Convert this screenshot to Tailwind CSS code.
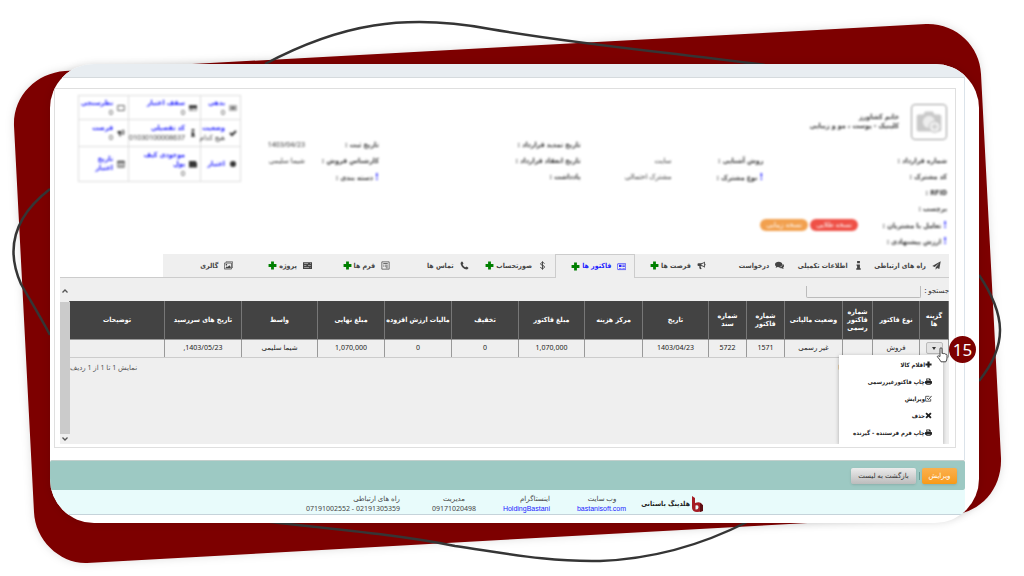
<!DOCTYPE html>
<html lang="fa" dir="rtl">
<head>
<meta charset="utf-8">
<meta name="viewport" content="width=device-width, initial-scale=1">
<title>فاکتور ها</title>
<script src="https://cdn.jsdelivr.net/npm/@tailwindcss/browser@4"></script>
</head>
<body class="relative min-h-screen overflow-hidden bg-white font-['Noto_Sans','DejaVu_Sans',sans-serif] text-[7px] leading-[10px] text-[#333] [&_b]:font-['DejaVu_Sans_Condensed','DejaVu_Sans',sans-serif]">

<svg class="hidden" aria-hidden="true">
  <symbol id="plus" viewBox="0 0 16 16"><path d="M5.500 1h5v4.500H15v5h-4.500V15h-5v-4.500H1v-5h4.500z" fill="currentColor"/></symbol>
  <symbol id="plane" viewBox="0 0 16 16"><path d="M15.500.5 13 14l-4-1.700L6.500 15.500V11.500L13 3.500 4.800 10.600.5 9z" fill="currentColor"/></symbol>
  <symbol id="info" viewBox="0 0 16 16"><path d="M5.500 0h5v4h-5zM4.500 6h6v7H12v2.500H4V13h1.500V8.500h-1z" fill="currentColor"/></symbol>
  <symbol id="chat" viewBox="0 0 16 16"><path d="M6.500 1.500c3.600 0 6.500 2.100 6.500 4.700s-2.900 4.700-6.500 4.700c-.6 0-1.200 0-1.800-.2-1.200.8-2.500 1.200-3.700 1.200.6-.6 1-1.200 1.100-2C.8 9 0 7.700 0 6.200c0-2.600 2.900-4.700 6.500-4.700zM13.800 5.500c1.400.7 2.200 2 2.200 3.300 0 1.200-.6 2.200-1.600 2.900.1.900.5 1.500 1.100 2.300-1.200 0-2.300-.4-3.200-1.200-2 .4-4.200.1-5.600-1.100C11 11.500 14 9 13.800 5.500z" fill="currentColor"/></symbol>
  <symbol id="horn" viewBox="0 0 16 16"><path d="M14 1v11c-2.500-2-5-3-7-3.200-1 .5-.8 1.500 0 2 0 1-.2 1.500 1.500 3-1 1-3 .8-3.600 0-.6-1.700-1.200-3-.6-5H2.500C1.500 8.800 1 8 1 7.500v-2C1 4.700 1.700 4 2.500 4H7c2.200 0 4.800-1.400 7-3zM12.500 3.500C11 4.500 9.500 5.100 8 5.300v2.400c1.500.2 3 .8 4.500 1.800z" fill="currentColor" fill-rule="evenodd"/><path d="M14 5c1.500 0 1.500 3 0 3z" fill="currentColor"/></symbol>
  <symbol id="news" viewBox="0 0 16 16"><path d="M1 3h14.500v10.500H1.500L.5 12.500V4.500H2" fill="none" stroke="currentColor" stroke-width="1.200"/><path d="M3.500 5H8v4H3.500zM9.500 5H14v1.200H9.500zM9.500 7.500H14v1.200H9.500zM3.500 10.500h4.500v1.200H3.500zM9.500 10.500H14v1.200H9.500z" fill="currentColor"/></symbol>
  <symbol id="dollar" viewBox="0 0 16 16"><path d="M11.500 4.500C11 3.300 9.800 2.800 8 2.800c-2 0-3.300.9-3.300 2.300 0 3.500 6.800 1.800 6.800 5.500 0 1.600-1.400 2.600-3.500 2.600-2 0-3.300-.7-3.700-2.200M8 .5v15" fill="none" stroke="currentColor" stroke-width="1.700"/></symbol>
  <symbol id="phone" viewBox="0 0 16 16"><path d="M1 3.500 3 1l1.500.5 1.700 3-1.500 1.600c1 2.300 3 4.200 5.200 5.200l1.600-1.500 3 1.700.5 1.500-2.500 2C7 15 1 9 1 3.500z" fill="currentColor"/></symbol>
  <symbol id="form" viewBox="0 0 16 16"><path d="M1.500 1.500h13v13h-13z" fill="none" stroke="currentColor" stroke-width="1.300"/><path d="M4 4h8v1.200H4zM4 6.700h2v1.200H4zM7.200 6.700H12v1.200H7.200zM4 9.200h2v1.200H4zM7.200 9.200H12v1.200H7.200zM8.500 11.500H12v1.300H8.500z" fill="currentColor"/></symbol>
  <symbol id="server" viewBox="0 0 16 16"><path d="M0 2h16v12H0zm2 2v1h7V4zm0 3.500v1h4v-1zM2 11v1h9v-1zM12.500 4v1H14V4zM9 7.500v1h5v-1zm4 3.500v1h1v-1z" fill="currentColor" fill-rule="evenodd"/></symbol>
  <symbol id="image" viewBox="0 0 16 16"><path d="M3.500 3V1.500h12v10H14M.7 3.700h12.600v10.600H.7z" fill="none" stroke="currentColor" stroke-width="1.300"/><path d="m2 12.800 3-3.500 1.500 1.500L9.500 7.500l2.500 3v2.300zM3 5.500h2.500V8H3z" fill="currentColor"/></symbol>
  <symbol id="print" viewBox="0 0 16 16"><path d="M4 1h7l2 2v4h1.500C15.500 7 16 8 16 8.500V13h-3v2.500H3V13H0V8.500C0 7.700.7 7 1.500 7H3V1zM5 3v2.500h6V4.500H9V3zm0 9v1.200h6V12z" fill="currentColor" fill-rule="evenodd"/></symbol>
  <symbol id="edit" viewBox="0 0 16 16"><path d="M13 9v5.200H1.500V3H10" fill="none" stroke="currentColor" stroke-width="1.600"/><path d="m5 7 3 3.500L15 2" fill="none" stroke="currentColor" stroke-width="2"/></symbol>
  <symbol id="cross" viewBox="0 0 16 16"><path d="m4 1 4 4 4-4 3 3-4 4 4 4-3 3-4-4-4 4-3-3 4-4-4-4z" fill="currentColor"/></symbol>
  <symbol id="money" viewBox="0 0 16 16"><path d="M.5 3.500h15v9H.5z" fill="none" stroke="currentColor"/><path d="M3 5h10v6H3z" fill="currentColor" opacity=".7"/></symbol>
  <symbol id="card" viewBox="0 0 16 16"><path d="M.5 3h15v10H.5z" fill="none" stroke="currentColor"/><path d="M0 3h16v6H0zM3 10.500h4v1H3z" fill="currentColor"/></symbol>
  <symbol id="box" viewBox="0 0 16 16"><path d="M1.500 3h13v10h-13z" fill="none" stroke="currentColor" stroke-width="1.500"/></symbol>
  <symbol id="check" viewBox="0 0 16 16"><path d="m2 8 4 4 8-8" fill="none" stroke="currentColor" stroke-width="4"/></symbol>
  <symbol id="dot" viewBox="0 0 16 16"><circle cx="8" cy="8" r="6" fill="currentColor"/></symbol>
  <symbol id="wallet" viewBox="0 0 16 16"><path d="M0 2h14v3h2v10H0z" fill="currentColor"/></symbol>
  <symbol id="calendar" viewBox="0 0 16 16"><path d="M1.500 2.500h13v12h-13z" fill="none" stroke="currentColor" stroke-width="1.500"/><path d="M1 2h14v3H1zM4 7h3v2H4zM9 7h3v2H9zM4 11h3v2H4zM9 11h3v2H9z" fill="currentColor"/></symbol>
</svg>

<svg class="absolute inset-0 h-full w-full" viewBox="0 0 1024 576" preserveAspectRatio="none" aria-hidden="true">
  <defs><filter id="soft" x="-5%" y="-5%" width="110%" height="110%"><feDropShadow dx="0" dy="0" stdDeviation="4" flood-color="#000" flood-opacity=".13"/></filter></defs>
  <path filter="url(#soft)" fill="#7d0000" d="M14 126C13 96 36 73 65 71L926 24C956 23 980 46 981 74L1001 458C1002 488 982 512 952 515L87 563C60 564 35 540 34 512Z"/>
  <path fill="none" stroke="#353535" stroke-width="2.500" d="M265 64C340 24 405 13 490 29C590 46 660 51 765 65M50 189C15 216 5 248 21 284C30 300 41 318 50 335M979 275C1006 315 1008 345 979 381M270 522C345 530 405 536 455 546C510 554 550 562 600 561C650 559 700 546 747 522"/>
</svg>

<main class="relative mt-16 mr-[45px] ml-[50px] rounded-[44px] bg-white shadow-[0_0_8px_rgba(0,0,0,0.12)]">
  <div class="overflow-clip rounded-[44px] pr-[14px] pb-2">
    <div class="h-[14px] border-b border-[#d5dadd] bg-[#e8edf1]"></div>

    <div class="border-r border-[#dbe3ea] pt-[10px] pr-2 pb-3 pl-1">
      <section class="border border-[#dfdfdf] pr-[6px] pb-[3px] pl-[5px]">

        <header class="flex items-start justify-between pr-[2px] pl-[18px]">
          <div class="h-[165px] flex-1 pt-[15px] blur-[1px]">
            <div class="flex items-center gap-3">
              <svg class="h-9 w-9 rounded-sm border border-[#999]" viewBox="0 0 36 36" aria-label="عکس"><path d="M5 12q0-2 2-2h5l2-3h8l2 3h5q2 0 2 2v14q0 2-2 2H7q-2 0-2-2z" fill="#c9c9c9"/><circle cx="18" cy="18" r="6.500" fill="#eee"/><circle cx="24" cy="23" r="6" fill="#eee" stroke="#bbb"/><path d="M24 20v6M21 23h6" stroke="#bbb"/></svg>
              <div class="flex flex-col leading-[9px]"><b>خانم کشاورز</b><b>کلینیک - پوست ، مو و زیبایی</b></div>
            </div>
            <div class="-mt-[3px] grid auto-rows-[16px] grid-cols-[89fr_95fr_92fr_91fr_202fr_74fr_64fr] items-center whitespace-nowrap">
              <b class="col-start-5">تاریخ تمدید قرارداد :</b><b>تاریخ ثبت :</b><span>1403/04/23</span>
              <b>شماره قرارداد :</b><span></span><b>روش آشنایی :</b><span>سایت</span><b>تاریخ انعقاد قرارداد :</b><b>کارشناس فروش :</b><span>شیما سلیمی</span>
              <b>کد مشترک :</b><span></span><b><i class="text-[9px] text-[#22f] not-italic">!</i> نوع مشترک :</b><span>مشترک احتمالی</span><b>یادداشت :</b><b><i class="text-[9px] text-[#22f] not-italic">!</i> دسته بندی :</b><span></span>
              <b class="col-span-7">RFID :</b>
              <b class="col-span-7">برچسب :</b>
              <b><i class="text-[9px] text-[#22f] not-italic">!</i> تعامل با مشتریان :</b>
              <div class="col-span-6 flex gap-[2px] text-center text-white">
                <span class="w-12 rounded-md bg-[#ef5046] leading-[12px]">نسخه طلایی</span><span class="w-12 rounded-md bg-[#f2a04e] leading-[12px]">نسخه زیبایی</span>
              </div>
              <b class="col-span-7"><i class="text-[9px] text-[#22f] not-italic">!</i> ارزش پیشنهادی :</b>
            </div>
          </div>
          <table class="mt-[6px] w-[162px] table-fixed border-collapse leading-[9px] blur-[1px] [&_td]:border [&_td]:border-[#ddd] [&_td]:px-[3px] [&_a]:block [&_a]:font-['DejaVu_Sans_Condensed','DejaVu_Sans',sans-serif] [&_a]:font-bold [&_a]:text-[#22f] [&_svg]:size-2 [&_svg]:shrink-0 [&_td>div]:flex [&_td>div]:items-center [&_td>div]:gap-1">
            <colgroup><col class="w-[40px]"><col class="w-[72px]"><col class="w-[50px]"></colgroup>
            <tr class="h-6">
              <td><div><svg><use href="#money"/></svg><span><a href="#">بدهی</a>0</span></div></td>
              <td><div><svg><use href="#card"/></svg><span><a href="#">سقف اعتبار</a>0</span></div></td>
              <td><div><svg><use href="#box"/></svg><span><a href="#">نظرسنجی</a>0</span></div></td>
            </tr>
            <tr class="h-[27px]">
              <td><div><svg><use href="#check"/></svg><span class="whitespace-nowrap"><a href="#">وضعیت</a>هیچ کدام</span></div></td>
              <td><div><svg><use href="#info"/></svg><span><a href="#">کد تفصیلی</a>01030100008637</span></div></td>
              <td><div><svg><use href="#horn"/></svg><span><a href="#">فرصت</a>0</span></div></td>
            </tr>
            <tr class="h-[35px]">
              <td><div><svg><use href="#dot"/></svg><a href="#">اعتبار</a></div></td>
              <td><div><svg><use href="#wallet"/></svg><span><a href="#">موجودی کیف پول</a>0</span></div></td>
              <td><div><svg><use href="#calendar"/></svg><a href="#">تاریخ اعتبار</a></div></td>
            </tr>
          </table>
        </header>

        <nav class="flex border-b border-[#ccc] font-['DejaVu_Sans_Condensed','DejaVu_Sans',sans-serif] font-bold whitespace-nowrap text-[#444] [&_svg]:size-[9px] [&_svg]:shrink-0 [&>a]:flex [&>a]:h-[23px] [&>a]:flex-1 [&>a]:items-center [&>a]:gap-[6px] [&>a]:bg-[#efefef] [&>a]:pr-2">
          <a href="#"><svg><use href="#plane"/></svg>راه های ارتباطی</a>
          <a href="#"><svg><use href="#info"/></svg>اطلاعات تکمیلی</a>
          <a href="#"><svg><use href="#chat"/></svg>درخواست</a>
          <a href="#"><svg><use href="#horn"/></svg><span class="flex items-center gap-[2px]">فرصت ها <svg class="text-[#008000]"><use href="#plus"/></svg></span></a>
          <a href="#" aria-current="page" class="relative -mb-px border border-b-0 border-[#ccc] text-[#22f] after:absolute after:inset-x-0 after:-bottom-px after:h-px after:bg-[#efefef]"><svg><use href="#news"/></svg><span class="flex items-center gap-[2px]">فاکتور ها <svg class="text-[#008000]"><use href="#plus"/></svg></span></a>
          <a href="#"><svg><use href="#dollar"/></svg><span class="flex items-center gap-[2px]">صورتحساب <svg class="text-[#008000]"><use href="#plus"/></svg></span></a>
          <a href="#"><svg><use href="#phone"/></svg>تماس ها</a>
          <a href="#"><svg><use href="#form"/></svg><span class="flex items-center gap-[2px]">فرم ها <svg class="text-[#008000]"><use href="#plus"/></svg></span></a>
          <a href="#"><svg><use href="#server"/></svg><span class="flex items-center gap-[2px]">پروژه <svg class="text-[#008000]"><use href="#plus"/></svg></span></a>
          <a href="#"><svg><use href="#image"/></svg>گالری</a>
          <div class="w-[103px]"></div>
        </nav>

        <div class="flex h-[166px] bg-[#efefef]">
          <div class="min-w-0 flex-1">
            <label class="flex h-[23px] items-start gap-[3px] pt-2 whitespace-nowrap"><span>جستجو :</span>
              <input type="text" class="h-3 w-[115px] rounded-b-xs border border-t-0 border-[#bbb] bg-transparent"></label>
            <table class="w-full table-fixed border-collapse text-center [&_td]:border [&_td]:border-[#999] [&_td]:border-b-[#ccc] [&_th]:border-x [&_th]:border-[#777]">
              <colgroup><col class="w-[29px]"><col class="w-[47px]"><col class="w-[30px]"><col class="w-[58px]"><col class="w-[38px]"><col class="w-[38px]"><col class="w-[66px]"><col class="w-[58px]"><col class="w-[66px]"><col class="w-[67px]"><col class="w-[67px]"><col class="w-[67px]"><col class="w-[76px]"><col class="w-[77px]"><col class="w-[95px]"></colgroup>
              <thead><tr class="h-[38px] bg-[#434343] font-['DejaVu_Sans_Condensed','DejaVu_Sans',sans-serif] leading-[8px] text-white">
                <th>گزینه<br>ها</th><th>نوع فاکتور</th><th>شماره فاکتور رسمی</th><th>وضعیت مالیاتی</th><th>شماره<br>فاکتور</th><th>شماره<br>سند</th><th>تاریخ</th><th>مرکز هزینه</th><th>مبلغ فاکتور</th><th>تخفیف</th><th class="whitespace-nowrap">مالیات ارزش افزوده</th><th>مبلغ نهایی</th><th>واسط</th><th>تاریخ های سررسید</th><th>توضیحات</th>
              </tr></thead>
              <tbody><tr class="h-[18px] text-[#222]">
                <td>
                  <div class="relative flex justify-center">
                    <button type="button" aria-label="گزینه ها" class="flex h-3 w-[17px] items-center justify-center rounded-xs border border-[#bbb] bg-[#e4e4e4]"><svg class="h-[3px] w-1" viewBox="0 0 4 3"><path d="M0 0h4L2 3z" fill="#333"/></svg></button>
                    <ul class="absolute top-[13px] right-[5px] z-10 h-[89px] w-[104px] bg-white pt-px pr-[11px] text-right font-['DejaVu_Sans_Condensed','DejaVu_Sans',sans-serif] text-[6px] font-bold text-[#222] shadow-[0_1px_4px_rgba(0,0,0,0.3)] [clip-path:inset(-4px_-6px_0_-6px)] [&_a]:flex [&_a]:h-[17px] [&_a]:items-center [&_a]:whitespace-nowrap [&_svg]:size-[7px] [&_svg]:shrink-0">
                      <li><a href="#"><svg><use href="#plus"/></svg>اقلام کالا</a></li>
                      <li><a href="#"><svg><use href="#print"/></svg>چاپ فاکتورغیررسمی</a></li>
                      <li><a href="#"><svg><use href="#edit"/></svg>ویرایش</a></li>
                      <li><a href="#"><svg><use href="#cross"/></svg>حذف</a></li>
                      <li><a href="#"><svg><use href="#print"/></svg>چاپ فرم فرستنده - گیرنده</a></li>
                    </ul>
                    <svg class="absolute top-[5px] right-0 z-20 h-4 w-3" viewBox="0 0 12 16" aria-hidden="true"><path d="M4 9V2q0-1.300 1-1.300T6 2v4.500q1-.8 1.700.2 1-.5 1.600.4 1.700-.2 1.700 1.400V11q0 2-1.200 3.800H5Q3.500 12 1.200 9.600q.5-1.600 2.800-.1z" fill="#fff" stroke="#333" stroke-width=".9"/></svg>
                    <span class="absolute -top-[6px] -right-[28px] z-20 size-[27px] rounded-full bg-[#7d0000] text-center text-[17px] leading-[27px] text-white">15</span>
                  </div>
                </td>
                <td>فروش</td><td></td><td>غیر رسمی</td><td>1571</td><td>5722</td><td>1403/04/23</td><td></td><td>1,070,000</td><td>0</td><td>0</td><td>1,070,000</td><td>شیما سلیمی</td><td>1403/05/23,</td><td></td>
              </tr></tbody>
            </table>
            <div class="flex justify-between pt-[5px] pr-[105px] text-[#555]"><span>ها</span><span>نمایش 1 تا 1 از 1 ردیف</span></div>
          </div>
          <div class="flex w-[10px] flex-col items-center justify-between">
            <svg class="mt-[11px] mb-[9px] h-1 w-[6px]" viewBox="0 0 6 4"><path d="m.5 3.500 2.500-2.500 2.500 2.500" fill="none" stroke="#555" stroke-width="1.300"/></svg>
            <div class="w-full flex-1 bg-[#cbcbcb]"></div>
            <svg class="my-[3px] h-1 w-[6px]" viewBox="0 0 6 4"><path d="m.5.5 2.500 2.500 2.500-2.500" fill="none" stroke="#555" stroke-width="1.300"/></svg>
          </div>
        </div>
      </section>
    </div>

    <div class="flex h-[30px] items-center gap-[2px] rounded-xs border-t border-[#c3cfcc] bg-[#9dc9c3] pr-2">
      <button type="button" class="h-4 w-[35px] rounded-xs bg-linear-to-b from-[#fbb04c] to-[#f89a14] text-white shadow-sm">ویرایش</button>
      <span class="h-2 w-px bg-[#6d9d97]"></span>
      <button type="button" class="mr-px h-4 w-[65px] rounded-xs bg-linear-to-b from-[#ececec] to-[#bcbcbc] text-[#333] shadow-sm">بازگشت به لیست</button>
    </div>

    <footer class="flex h-[25px] items-center border-b border-[#c5d3da] bg-[#e8fbfb] pt-1 pr-[262px] whitespace-nowrap text-[#444]">
      <svg class="h-4 w-3" viewBox="0 0 12 16" aria-hidden="true"><path d="M1 0 4 2v5q5-2 7 1v7q-2 1-5 1Q1 16 1 11z" fill="#a51c24"/><path d="M4.500 9.500q3-1 3 1.500 0 2.500-3 2.500z" fill="#e8fbfb"/><path d="m9 7 3 2v6l-3 1z" fill="#5c0c12"/></svg>
      <b class="mr-px ml-3 w-[52px] text-[#222]">هلدینگ باستانی</b>
      <p class="ml-7 w-12 text-center">وب سایت<br><a href="#" class="font-['Liberation_Sans'] text-[#22f]">bastanisoft.com</a></p>
      <p class="ml-[29px] w-[45px]">اینستاگرام<br><a href="#" class="font-['Liberation_Sans'] text-[#22f]">HoldingBastani</a></p>
      <p class="ml-8 w-11 text-center">مدیریت<br>09171020498</p>
      <p>راه های ارتباطی<br>02191305359 - 07191002552</p>
    </footer>
  </div>
</main>
</body>
</html>
